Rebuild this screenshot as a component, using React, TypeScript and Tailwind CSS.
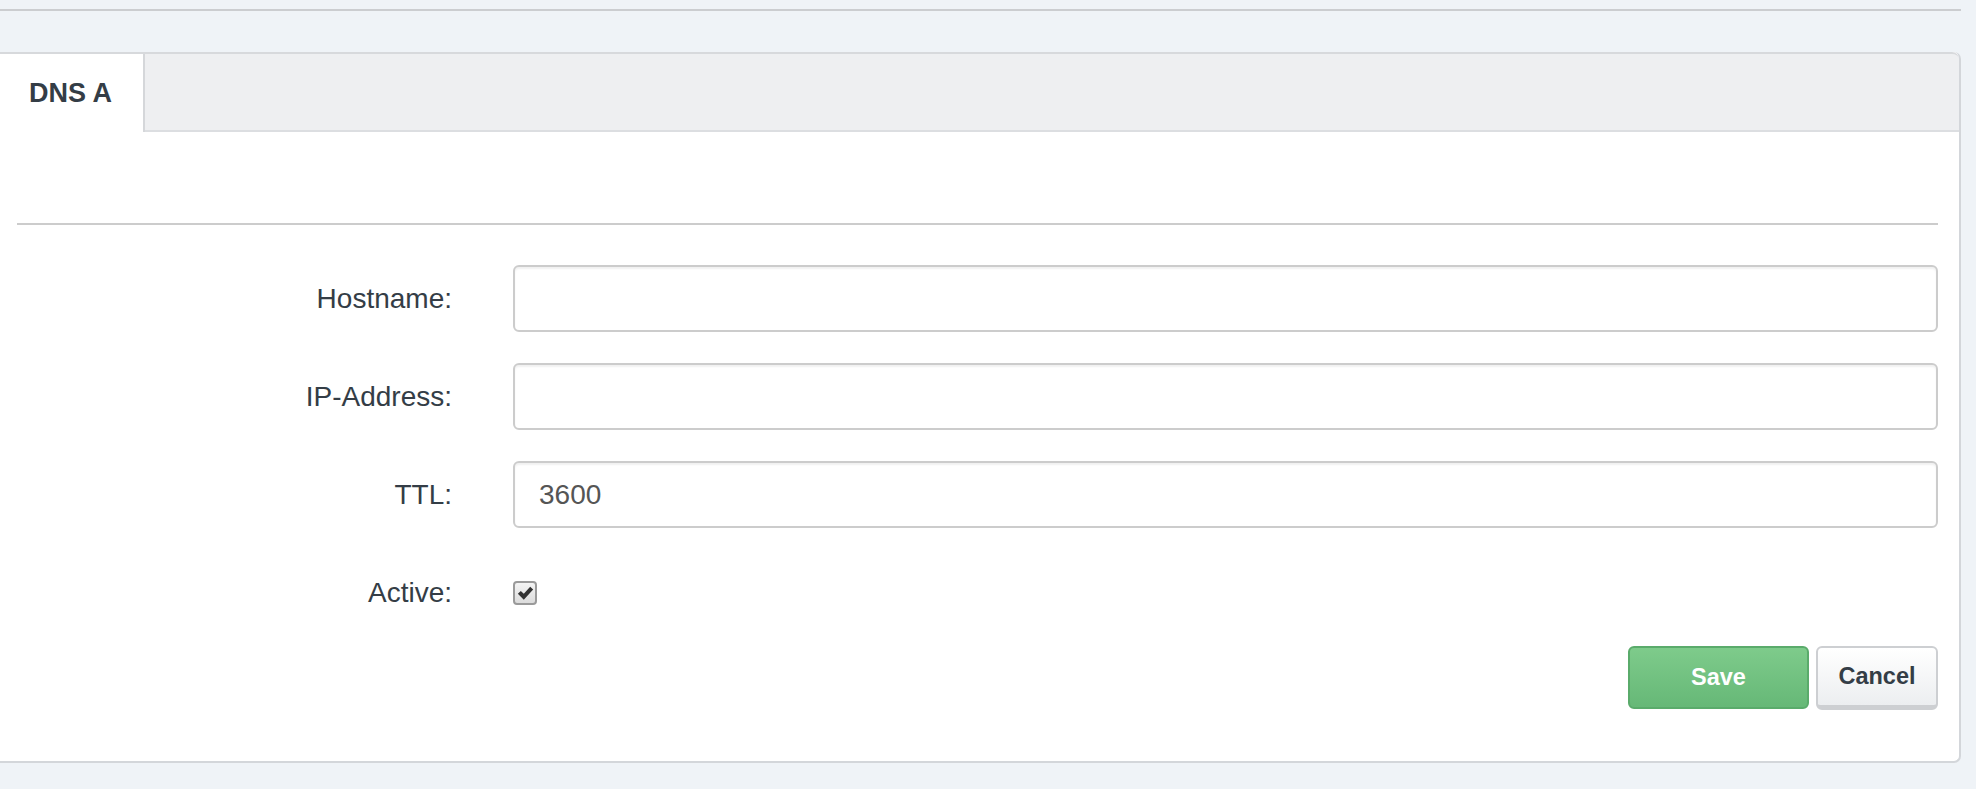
const font = { fontFamily: '"Liberation Sans", Arial, sans-serif' };

function Field({ label, value }: { label: string; value?: string }) {
  return (
    <>
      <label className="text-right text-[28px] text-[#343d46]">{label}</label>
      <input
        readOnly
        value={value ?? ""}
        className="h-[67px] w-full rounded-[6px] border-2 border-[#cccccc] bg-white px-[24px] text-[28px] text-[#555555] shadow-[inset_0_2px_2px_rgba(0,0,0,0.06)] outline-none"
        style={font}
      />
    </>
  );
}

export default function App() {
  return (
    <div className="min-h-[789px] w-[1976px] bg-[#eff3f7] pr-[15px]" style={font}>
      <div className="h-[11px] border-b-2 border-[#cbcdd0]" />

      <div className="mt-[41px] rounded-r-[7px] border-r-2 border-b-2 border-[#d3d6da] bg-white">
        {/* tabs */}
        <div className="flex h-[80px] rounded-tr-[7px] border-t-2 border-[#d7d9dc] bg-[#eeeff1]">
          <div className="flex w-[145px] items-center border-r-2 border-[#d5d7da] bg-white pl-[29px] text-[27px] font-bold text-[#343d46]">
            DNS A
          </div>
          <div className="flex-1 border-b-2 border-[#dcdee1]" />
        </div>

        <div className="pt-[91px] pb-[51px] pr-[21px]">
          <div className="ml-[17px] h-[2px] bg-[#cccccc]" />

          <div className="mt-[40px] grid grid-cols-[452px_1fr] items-center gap-x-[61px] gap-y-[31px]">
            <Field label="Hostname:" />
            <Field label="IP-Address:" />
            <Field label="TTL:" value="3600" />
            <label className="text-right text-[28px] text-[#343d46]">Active:</label>
            <div className="flex h-[67px] items-center">
              <span className="flex h-[24px] w-[24px] items-center justify-center rounded-[4px] border-2 border-[#9a9a9a] bg-gradient-to-b from-[#f4f4f4] to-[#dcdcdc]">
                <svg viewBox="0 0 20 18" className="h-[16px] w-[17px]">
                  <path d="M1 10 L4.5 6.5 L8 10 L15.5 1.5 L19 5 L8 17 Z" fill="#333333" />
                </svg>
              </span>
            </div>
          </div>

          <div className="mt-[20px] flex justify-end gap-[7px]">
            <button className="h-[63px] w-[181px] rounded-[6px] border-2 border-[#5aab6b] bg-gradient-to-b from-[#7ecb8b] to-[#66b877] text-[23.5px] font-bold text-white">
              Save
            </button>
            <button className="h-[64px] w-[122px] rounded-[6px] border-2 border-b-[5px] border-[#cdcfd2] bg-gradient-to-b from-white to-[#eceef0] text-[23.5px] font-bold text-[#343d46]">
              Cancel
            </button>
          </div>
        </div>
      </div>
    </div>
  );
}
